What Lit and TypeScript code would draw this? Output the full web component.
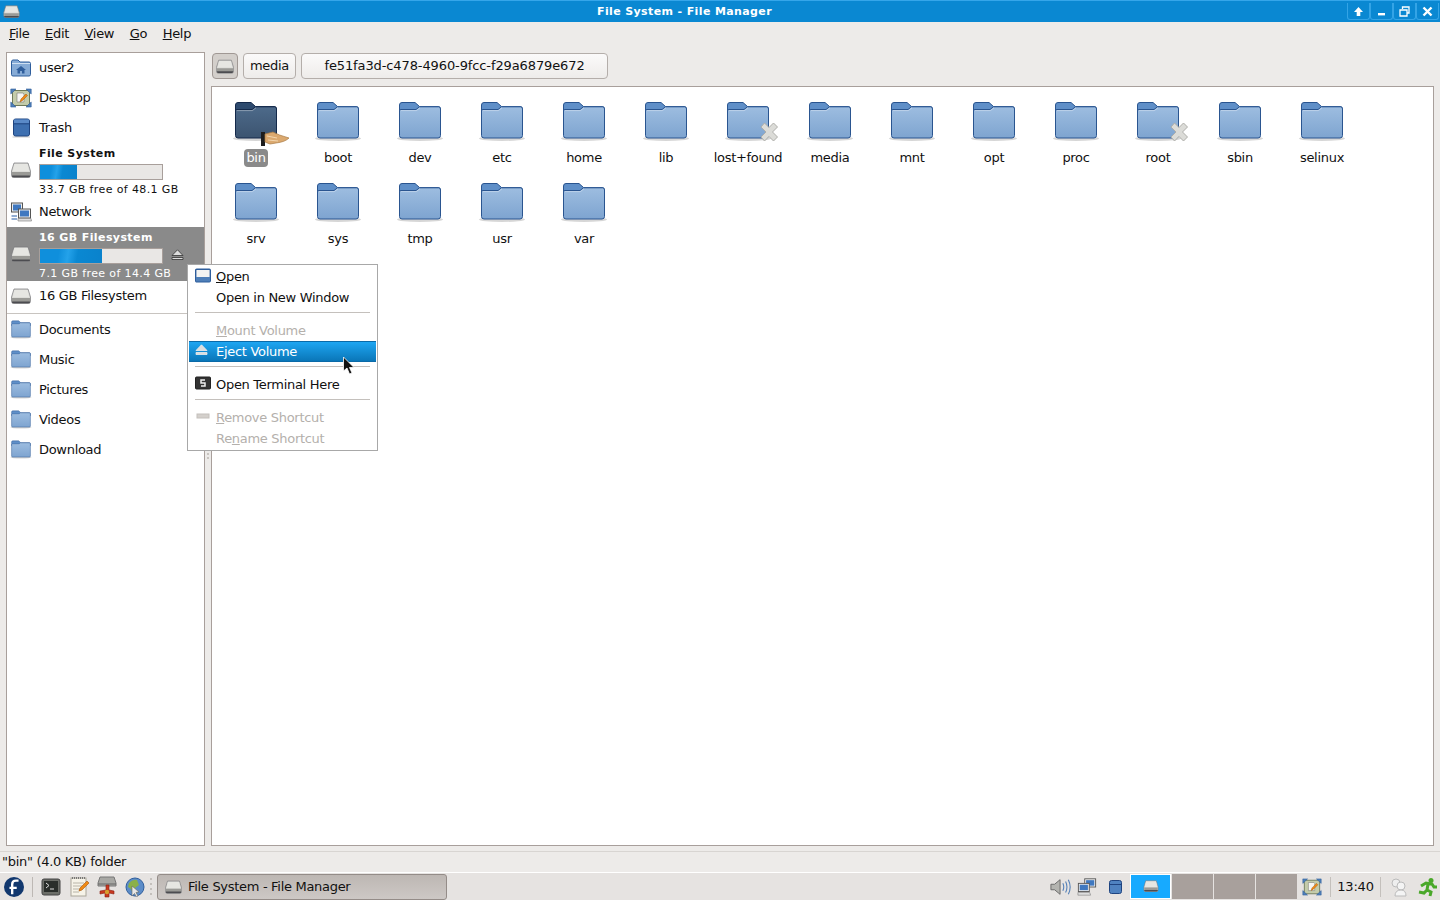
import { LitElement, html, css, svg } from 'lit';
import { customElement } from 'lit/decorators.js';

let gradId = 0;

// big folder, the palette changes for the selected one
function folder(size: number, dark = false) {
    const id = `f${gradId++}`;
    const top = dark ? '#4d6a8a' : '#9dbde0';
    const bottom = dark ? '#3c5470' : '#7ea4d0';
    const back = dark ? '#2d4a6e' : '#5f8fc8';
    const line = dark ? '#14294a' : '#2a5590';
    return html`<svg width=${size} height=${Math.round(size * 0.9)} viewBox="0 0 48 43">
        <defs>
            <linearGradient id=${id} x1="0" y1="0" x2="0" y2="1">
                <stop offset="0" stop-color=${top}></stop>
                <stop offset="1" stop-color=${bottom}></stop>
            </linearGradient>
        </defs>
        <ellipse cx="24" cy="37.5" rx="23" ry="2.5" fill="#000" opacity="0.16"></ellipse>
        <path d="M3.5 7 L3.5 4 Q3.5 1.5 6 1.5 H19 L23.5 5.5 H42 Q44.5 5.5 44.5 8 V12 H3.5 Z" fill=${back} stroke=${line}></path>
        <path d="M3.5 10 Q3.5 8.5 5 8.5 H20 L23.5 5.8 H42.5 Q44.5 5.8 44.5 8 V34.5 Q44.5 37 42 37 H6 Q3.5 37 3.5 34.5 Z" fill="url(#${id})" stroke=${line}></path>
        <path d="M4.5 9.6 H20.4 L24 6.8" fill="none" stroke="#fff" stroke-opacity="0.35"></path>
    </svg>`;
}

const cross = svg`<g transform="translate(34 21)">
    <path d="M3 5 L8 10 L3 15 L6.5 19 L11 14.5 L15.5 19 L19.5 15 L14.5 10 L19.5 5 L15.5 1 L11 5.5 L6.5 1 Z" fill="#dcdcd8" stroke="#aeaeaa"></path>
</g>`;

const hand = svg`<g>
    <rect x="29" y="31" width="4" height="14" fill="#1d1d1d"></rect>
    <path d="M33 33 L41 31 Q46 34 57 37 Q53 41 44 42 L38 43 L33 41 Z" fill="#dba96f" stroke="#a87840" stroke-width="0.7"></path>
    <path d="M35 35 L45 37 M36 39 L46 40" stroke="#f3d6ae" fill="none"></path>
</g>`;

function drive(w = 20, h = 16) {
    return html`<svg width=${w} height=${h} viewBox="0 0 20 16">
        <path d="M3 1 H17 L19.5 9 V13 Q19.5 15.5 17.5 15.5 H2.5 Q.5 15.5 .5 13 V9 Z" fill="#d8d8d4" stroke="#77777a" stroke-width="0.7"></path>
        <path d="M1 10 H19 V13 Q19 15 17.5 15 H2.5 Q1 15 1 13 Z" fill="#9a9a96"></path>
        <path d="M1 13.4 H19 V14.4 Q18.5 15.3 17.5 15.3 H2.5 Q1.5 15.3 1 14.4 Z" fill="#4c4c50"></path>
        <path d="M3.4 2 H16.6 L18.2 9.2 H1.8 Z" fill="#e6e6e2"></path>
    </svg>`;
}

function home() {
    return html`<svg width="22" height="20" viewBox="0 0 22 20">
        <path d="M1.5 4 Q1.5 2 3 2 H8 L10 4 H19 Q20.5 4 20.5 5.5 V16.5 Q20.5 18 19 18 H3 Q1.5 18 1.5 16.5 Z" fill="#86abd6" stroke="#2f5e9c"></path>
        <path d="M2 5.5 H20" stroke="#cfe0f2"></path>
        <path d="M6 12 L11 8 L16 12 H14.5 V15.5 H12 V13 H10 V15.5 H7.5 V12 Z" fill="#2f5e9c"></path>
    </svg>`;
}

function desktop(w = 22, h = 20) {
    return html`<svg width=${w} height=${h} viewBox="0 0 22 20">
        <rect x="2.5" y="2.5" width="17" height="15" rx="1.5" fill="#c4ccaa" stroke="#6e7a5a"></rect>
        <path d="M.8 1 H6 L.8 6 Z M21.2 1 H16 L21.2 6 Z M.8 19 H6 L.8 14 Z M21.2 19 H16 L21.2 14 Z" fill="#4f7fb8" stroke="#2f5e9c" stroke-width="0.6"></path>
        <path d="M7 5 H13 L14 6 V14 H7 Z" fill="#f6f6f2" stroke="#7a7a76" stroke-width="0.6"></path>
        <path d="M10 14 L11 11 L16 6 L17.5 7.5 L12.5 12.5 Z" fill="#f08a14" stroke="#a85408" stroke-width="0.5"></path>
    </svg>`;
}

function trash() {
    return html`<svg width="20" height="20" viewBox="0 0 20 20">
        <rect x="2.5" y="1" width="16" height="17" rx="2" fill="#3d6fb0" stroke="#1f4480"></rect>
        <rect x="3" y="1.5" width="15" height="4" fill="#5a8ac8"></rect>
        <path d="M3 5.8 H18" stroke="#1f4480"></path>
        <path d="M1.5 19 H19" stroke="#000" stroke-opacity="0.2"></path>
    </svg>`;
}

function network(w = 22, h = 20) {
    return html`<svg width=${w} height=${h} viewBox="0 0 22 20">
        <rect x="1.5" y="1" width="11" height="9" fill="#eee" stroke="#555"></rect>
        <rect x="3" y="2.5" width="8" height="6" fill="#3f78c0"></rect>
        <rect x="8.5" y="7" width="12" height="9" fill="#eee" stroke="#555"></rect>
        <rect x="10" y="8.5" width="9" height="6" fill="#3f78c0"></rect>
        <path d="M8 16.5 H21 L21.5 19 H8 Z" fill="#ddd" stroke="#777" stroke-width="0.6"></path>
        <path d="M1.5 14 H7 M1.5 17 H7" stroke="#6f93c4" stroke-width="1.5"></path>
    </svg>`;
}

function eject(color = '#555') {
    return html`<svg class="ej" width="13" height="11" viewBox="0 0 13 11">
        <path d="M6.5 .8 L12 6.5 H1 Z" fill="#ddd" stroke=${color} stroke-width="0.8"></path>
        <path d="M1 8.5 H12 V10.5 H1 Z" fill="#ddd" stroke=${color} stroke-width="0.8"></path>
    </svg>`;
}

const files = [
    'bin', 'boot', 'dev', 'etc', 'home', 'lib', 'lost+found', 'media', 'mnt',
    'opt', 'proc', 'root', 'sbin', 'selinux', 'srv', 'sys', 'tmp', 'usr', 'var',
];
const locked = ['lost+found', 'root'];
const places = ['Documents', 'Music', 'Pictures', 'Videos', 'Download'];

@customElement('app-root')
export class AppRoot extends LitElement {
    static override styles = css`
        :host {
            display: flex;
            flex-direction: column;
            width: 1440px;
            height: 900px;
            overflow: hidden;
            position: relative;
            background: #edebe9;
            color: #111;
            font: 13px/16px 'DejaVu Sans', sans-serif;
            letter-spacing: -0.3px;
        }
        svg { display: block; }
        u { text-underline-offset: 1px; }

        .title {
            height: 22px;
            flex: none;
            display: flex;
            align-items: center;
            box-sizing: border-box;
            padding: 0 1px 0 3px;
            background: #0a88d2;
            border-top: 1px solid #35a6ea;
        }
        .title-text {
            flex: 1;
            text-align: center;
            color: #fff;
            font-size: 11px;
            font-weight: bold;
            padding: 1px 0 0 2px;
            letter-spacing: 0.38px;
        }
        .wm { display: flex; }
        .wm div {
            width: 23px;
            height: 17px;
            box-sizing: border-box;
            border: 1px solid #34a4e6;
            border-top: none;
            border-radius: 0 0 3px 3px;
            display: flex;
            align-items: center;
            justify-content: center;
        }

        .menubar {
            height: 23px;
            flex: none;
            display: flex;
            align-items: center;
            gap: 15.5px;
            padding-left: 9px;
        }

        .main {
            flex: 1;
            min-height: 0;
            display: flex;
            padding: 7px 6px 5px;
        }
        .grip {
            width: 6px;
            flex: none;
            display: flex;
            align-items: center;
            justify-content: center;
        }
        .grip div {
            width: 2px;
            height: 14px;
            margin-top: 6px;
            background: repeating-linear-gradient(#c8c4c0 0 2px, transparent 2px 4px);
        }
        .side {
            width: 199px;
            flex: none;
            box-sizing: border-box;
            background: #fff;
            border: 1px solid #a89f9b;
        }
        .row {
            height: 30px;
            display: flex;
            align-items: center;
            gap: 7px;
            padding-left: 3px;
        }
        .row .ic { width: 22px; display: flex; justify-content: center; flex: none; }
        .vol { height: 54px; }
        .vol.sel { background: #8a8a8a; color: #fff; }
        .vol-body { width: 150px; align-self: flex-start; padding-top: 4px; }
        .vol-name { font-size: 11px; font-weight: bold; line-height: 14px; letter-spacing: 0.4px; }
        .vol-free { font-size: 11px; line-height: 14px; letter-spacing: 0.38px; white-space: nowrap; }
        .bar-line { display: flex; align-items: center; gap: 8px; margin: 3px 0; }
        .bar-line .ej { flex: none; margin-top: -3px; }
        .bar {
            width: 124px;
            height: 16px;
            box-sizing: border-box;
            background: #e9e7e5;
            border: 1px solid #a89f9b;
            flex: none;
        }
        .fill {
            height: 100%;
            background: linear-gradient(100deg, #0f8fdc 0 30%, #24a2ea 45%, #0a88d2 60%, #0a82cc);
        }
        .divider { height: 1px; background: #c8c4c0; margin: 2px 0 1px; }

        .right {
            flex: 1;
            min-width: 0;
            display: flex;
            flex-direction: column;
            gap: 6px;
        }
        .path { height: 28px; display: flex; align-items: center; gap: 5px; padding-left: 1px; flex: none; }
        .crumb {
            height: 26px;
            box-sizing: border-box;
            border: 1px solid #b4aeaa;
            border-radius: 4px;
            background: linear-gradient(#fbfafa, #eeecea);
            display: flex;
            align-items: center;
            justify-content: center;
        }
        .crumb.on { width: 26px; background: #d3cfcb; border-color: #a09894; }
        .crumb.media { width: 53px; }
        .crumb.long { width: 307px; letter-spacing: -0.11px; }

        .icons {
            flex: 1;
            box-sizing: border-box;
            background: #fff;
            border: 1px solid #a89f9b;
            padding: 9px 3px;
            display: grid;
            grid-template-columns: repeat(14, 82px);
            grid-auto-rows: 81px;
            align-content: start;
        }
        .file { display: flex; flex-direction: column; align-items: center; position: relative; }
        .file svg { margin-top: 5px; }
        .file .emb { position: absolute; left: 17px; top: 0; }
        .file span { margin-top: 5px; padding: 0 2px; line-height: 18px; border-radius: 4px; }
        .file.sel span { background: #8a8a8a; color: #fff; }

        .status {
            height: 21px;
            flex: none;
            box-sizing: border-box;
            border-top: 1px solid #d8d5d2;
            padding-left: 2px;
            display: flex;
            align-items: center;
            background: #edebe9;
        }

        .task {
            height: 28px;
            flex: none;
            box-sizing: border-box;
            border-top: 1px solid #fff;
            display: flex;
            align-items: center;
            background: #e6e3e1;
            padding-right: 1px;
        }
        .launch { display: flex; align-items: center; width: 157px; padding-left: 4px; box-sizing: border-box; flex: none; }
        .launch .fed { margin-right: 8px; }
        .launch .sep { width: 1px; height: 20px; background: #bdb8b4; margin-right: 8px; }
        .launch .ti { width: 28px; display: flex; justify-content: flex-start; }
        .launch .dots {
            width: 2px;
            height: 18px;
            margin-left: -3px;
            background: repeating-linear-gradient(#c4c0bc 0 2px, transparent 2px 5px);
        }
        .win {
            width: 290px;
            height: 26px;
            flex: none;
            box-sizing: border-box;
            border: 1px solid #948c88;
            border-radius: 3px;
            background: linear-gradient(#bdb7b3, #cdc8c5);
            display: flex;
            align-items: center;
            gap: 6px;
            padding-left: 7px;
        }
        .tray { margin-left: auto; display: flex; align-items: center; }
        .tray .vol-ic { margin-right: 5px; }
        .tray .net-ic { margin-right: 12px; }
        .tray .bin-ic { margin-right: 8px; }
        .tray .user-ic { margin: 0 10px 0 8px; }
        .pager { display: flex; gap: 1px; margin-right: 5px; }
        .pager div { width: 41px; height: 25px; background: #a8a09c; }
        .pager .cur {
            background: #17aaff;
            border-bottom: 1px solid #0a5a90;
            box-sizing: border-box;
            display: flex;
            align-items: center;
            justify-content: center;
            outline: 1px solid #fff;
            outline-offset: -1px;
        }
        .clock {
            width: 51px;
            box-sizing: border-box;
            text-align: center;
            margin-left: 8px;
            border-left: 1px solid #c4c0bc;
            border-right: 1px solid #c4c0bc;
            line-height: 20px;
            letter-spacing: -0.2px;
        }

        .menu {
            position: absolute;
            left: 187px;
            top: 264px;
            width: 191px;
            height: 187px;
            box-sizing: border-box;
            background: #fff;
            border: 1px solid #a8a8a8;
            padding: 1px;
        }
        .mi {
            height: 21px;
            display: flex;
            align-items: center;
            padding-left: 27px;
            position: relative;
        }
        .mi.off { color: #b4b0ac; }
        .mi.hot {
            background: linear-gradient(#1ea6f2, #0a76b8);
            color: #fff;
            border: 1px solid #0a6aa8;
            border-width: 1px 0;
            box-sizing: border-box;
        }
        .mi .mic { position: absolute; left: 6px; top: 2px; }
        .msep { height: 1px; background: #c4c0bc; margin: 4px 6px 7px; }
        .cursor { position: absolute; left: 342px; top: 356px; }
    `;

    private renderVolume(name: string, free: string, pct: number, sel: boolean) {
        return html`<div class="row vol ${sel ? 'sel' : ''}">
            <div class="ic">${drive()}</div>
            <div class="vol-body">
                <div class="vol-name">${name}</div>
                <div class="bar-line">
                    <div class="bar"><div class="fill" style="width:${pct}%"></div></div>
                    ${sel ? eject('#333') : ''}
                </div>
                <div class="vol-free">${free}</div>
            </div>
        </div>`;
    }

    private renderSide() {
        return html`<div class="side">
            <div class="row"><div class="ic">${home()}</div>user2</div>
            <div class="row"><div class="ic">${desktop()}</div>Desktop</div>
            <div class="row"><div class="ic">${trash()}</div>Trash</div>
            ${this.renderVolume('File System', '33.7 GB free of 48.1 GB', 30, false)}
            <div class="row"><div class="ic">${network()}</div>Network</div>
            ${this.renderVolume('16 GB Filesystem', '7.1 GB free of 14.4 GB', 51, true)}
            <div class="row"><div class="ic">${drive()}</div>16 GB Filesystem</div>
            <div class="divider"></div>
            ${places.map((p) => html`<div class="row"><div class="ic">${folder(24)}</div>${p}</div>`)}
        </div>`;
    }

    private renderFile(name: string) {
        const sel = name === 'bin';
        const big = folder(48, sel);
        const extra = locked.includes(name)
            ? html`<svg class="emb" width="60" height="48" viewBox="0 0 60 48">${cross}</svg>`
            : sel
              ? html`<svg class="emb" width="60" height="48" viewBox="0 0 60 48">${hand}</svg>`
              : '';
        return html`<div class="file ${sel ? 'sel' : ''}">${big}${extra}<span>${name}</span></div>`;
    }

    private renderMenu() {
        return html`<div class="menu">
            <div class="mi">
                <span class="mic"><svg width="16" height="15" viewBox="0 0 16 15">
                    <rect x=".7" y="1.2" width="14.6" height="12.6" rx="1" fill="#f4f4f2" stroke="#2f5e9c" stroke-width="1.4"></rect>
                    <path d="M1 9 H15 V13.5 H1 Z" fill="#4f7fb8"></path>
                </svg></span>
                <span><u>O</u>pen</span>
            </div>
            <div class="mi">Open in New Window</div>
            <div class="msep"></div>
            <div class="mi off"><span><u>M</u>ount Volume</span></div>
            <div class="mi hot">
                <span class="mic">${eject('#eee')}</span>
                <span>E<u>j</u>ect Volume</span>
            </div>
            <div class="msep"></div>
            <div class="mi">
                <span class="mic"><svg width="16" height="14" viewBox="0 0 16 14">
                    <rect x=".5" y="1" width="15" height="12" rx="1" fill="#333" stroke="#222"></rect>
                    <path d="M10 4 H6 V7 H10 V10 H6" fill="none" stroke="#eee" stroke-width="1.5"></path>
                </svg></span>
                Open Terminal Here
            </div>
            <div class="msep"></div>
            <div class="mi off">
                <span class="mic"><svg width="16" height="14" viewBox="0 0 16 14">
                    <rect x="2" y="5" width="12" height="4" fill="#d4d0cc" stroke="#c4c0bc"></rect>
                </svg></span>
                <span><u>R</u>emove Shortcut</span>
            </div>
            <div class="mi off"><span>Re<u>n</u>ame Shortcut</span></div>
        </div>`;
    }

    private renderTask() {
        return html`<div class="task">
            <div class="launch">
                <svg class="fed" width="20" height="20" viewBox="0 0 22 22">
                    <circle cx="11" cy="11" r="11" fill="#12386e"></circle>
                    <path d="M6 12 H14 M9 19 V8 Q9 4 13 4 H16" fill="none" stroke="#fff" stroke-width="2.6"></path>
                </svg>
                <div class="sep"></div>
                <div class="ti"><svg width="20" height="20" viewBox="0 0 20 20">
                    <rect x="1" y="2" width="18" height="16" rx="2" fill="#6c6e68" stroke="#444"></rect>
                    <rect x="3" y="4" width="14" height="11" fill="#2a2e2a"></rect>
                    <path d="M5 6 L8 8.5 L5 11 M9 12 H13" fill="none" stroke="#ddd"></path>
                </svg></div>
                <div class="ti"><svg width="22" height="21" viewBox="0 0 22 21">
                    <rect x="2" y="2" width="15" height="18" fill="#f6f3e8" stroke="#aaa69a"></rect>
                    <path d="M4 7 H15 M4 10 H13 M4 13 H12 M4 16 H10" stroke="#b8b4a8"></path>
                    <path d="M3 2 H16" stroke="#777" stroke-dasharray="1 1" stroke-width="2"></path>
                    <path d="M10 15 L11 12 L18 5 L20 7 L13 14 Z" fill="#f08a14" stroke="#a85408" stroke-width="0.6"></path>
                </svg></div>
                <div class="ti"><svg width="20" height="22" viewBox="0 0 20 22">
                    <path d="M3 1 H17 L19 7 V10 H1 V7 Z" fill="#a8a8a4" stroke="#777"></path>
                    <path d="M1 8 H19" stroke="#666"></path>
                    <path d="M9 9 H12 V14 L17 15 V18 L12 17 V21 H8 V17 L3 18 V15 L9 14 Z" fill="#c83820" stroke="#8a2010" stroke-width="0.6"></path>
                    <circle cx="10" cy="16" r="2.2" fill="#d4a030"></circle>
                </svg></div>
                <div class="ti"><svg width="20" height="20" viewBox="0 0 20 20">
                    <circle cx="10" cy="10" r="9" fill="#5c8cc8" stroke="#2f5e9c"></circle>
                    <path d="M4 6 Q8 2 12 3 L14 8 L10 11 L12 16 L8 17 L6 12 L3 10 Z" fill="#8ab04a"></path>
                    <path d="M7 9 L7 19 L9.5 16.5 L11.5 20 L13 19 L11 15.5 L14 15 Z" fill="#e8e8e8" stroke="#666" stroke-width="0.6"></path>
                </svg></div>
                <div class="dots"></div>
            </div>
            <div class="win">${drive(17, 14)}<span>File System - File Manager</span></div>
            <div class="tray">
                <svg class="vol-ic" width="22" height="20" viewBox="0 0 24 20">
                    <path d="M1 7 H5 L11 2 V18 L5 13 H1 Z" fill="#b4b4b0" stroke="#666"></path>
                    <path d="M14 6 Q16 10 14 14 M17 4 Q20 10 17 16 M20 2 Q24 10 20 18" fill="none" stroke="#5580b8" stroke-width="1.2"></path>
                </svg>
                <svg class="net-ic" width="20" height="20" viewBox="0 0 22 20">
                    <rect x="8.5" y="1" width="12" height="9" fill="#eee" stroke="#555"></rect>
                    <rect x="10" y="2.5" width="9" height="6" fill="#3f78c0"></rect>
                    <rect x="1.5" y="6" width="12" height="9" fill="#eee" stroke="#555"></rect>
                    <rect x="3" y="7.5" width="9" height="6" fill="#3f78c0"></rect>
                    <path d="M1 16 H14 L15 19 H1 Z" fill="#ddd" stroke="#777" stroke-width="0.6"></path>
                </svg>
                <svg class="bin-ic" width="13" height="14" viewBox="0 0 13 14">
                    <rect x=".5" y=".5" width="12" height="13" rx="2" fill="#4f82c0" stroke="#1f4480"></rect>
                    <path d="M1 4.5 H12" stroke="#1f4480"></path>
                </svg>
                <div class="pager">
                    <div class="cur">${drive(16, 12)}</div>
                    <div></div><div></div><div></div>
                </div>
                ${desktop(20, 18)}
                <div class="clock">13:40</div>
                <svg class="user-ic" width="18" height="20" viewBox="0 0 18 20">
                    <circle cx="7" cy="6" r="4" fill="#eee" stroke="#bbb"></circle>
                    <circle cx="12" cy="9" r="4" fill="#f4f4f4" stroke="#bbb"></circle>
                    <path d="M6 19 Q6 13 12 13 Q17 13 17 19 Z" fill="#f4f4f4" stroke="#bbb"></path>
                </svg>
                <svg width="22" height="20" viewBox="0 0 20 20">
                    <circle cx="13" cy="3.5" r="2.5" fill="#4aa82a"></circle>
                    <path d="M3 9 L8 6 L14 7 L16 10 L19 10 M10 7 L9 13 L13 15 L12 19 M9 13 L6 16 L1 15" fill="none" stroke="#4aa82a" stroke-width="3"></path>
                </svg>
            </div>
        </div>`;
    }

    override render() {
        return html`
            <div class="title">
                ${drive(17, 13)}
                <div class="title-text">File System - File Manager</div>
                <div class="wm">
                    <div><svg width="11" height="11" viewBox="0 0 11 11"><path d="M5.5 1 L10 6 H7.3 V10 H3.7 V6 H1 Z" fill="#fff"></path></svg></div>
                    <div><svg width="11" height="11" viewBox="0 0 11 11"><rect x="2" y="7" width="7" height="2.4" fill="#fff"></rect></svg></div>
                    <div><svg width="11" height="11" viewBox="0 0 11 11"><path d="M3.5 3 V1 H10 V7 H8 M1 4 H8 V10 H1 Z" fill="none" stroke="#fff" stroke-width="1.3"></path></svg></div>
                    <div><svg width="11" height="11" viewBox="0 0 11 11"><path d="M1.5 1.5 L9.5 9.5 M9.5 1.5 L1.5 9.5" stroke="#fff" stroke-width="2.4"></path></svg></div>
                </div>
            </div>
            <div class="menubar">
                <span><u>F</u>ile</span><span><u>E</u>dit</span><span><u>V</u>iew</span><span><u>G</u>o</span><span><u>H</u>elp</span>
            </div>
            <div class="main">
                ${this.renderSide()}
                <div class="grip"><div></div></div>
                <div class="right">
                    <div class="path">
                        <div class="crumb on">${drive(18, 15)}</div>
                        <div class="crumb media">media</div>
                        <div class="crumb long">fe51fa3d-c478-4960-9fcc-f29a6879e672</div>
                    </div>
                    <div class="icons">${files.map((f) => this.renderFile(f))}</div>
                </div>
            </div>
            <div class="status">"bin" (4.0 KB) folder</div>
            ${this.renderTask()}
            ${this.renderMenu()}
            <svg class="cursor" width="13" height="20" viewBox="0 0 13 20">
                <path d="M1.5 1 V15 L5 12 L7.5 18 L10 17 L7.5 11.5 L12 11.5 Z" fill="#111" stroke="#fff" stroke-width="0.8"></path>
            </svg>
        `;
    }
}
